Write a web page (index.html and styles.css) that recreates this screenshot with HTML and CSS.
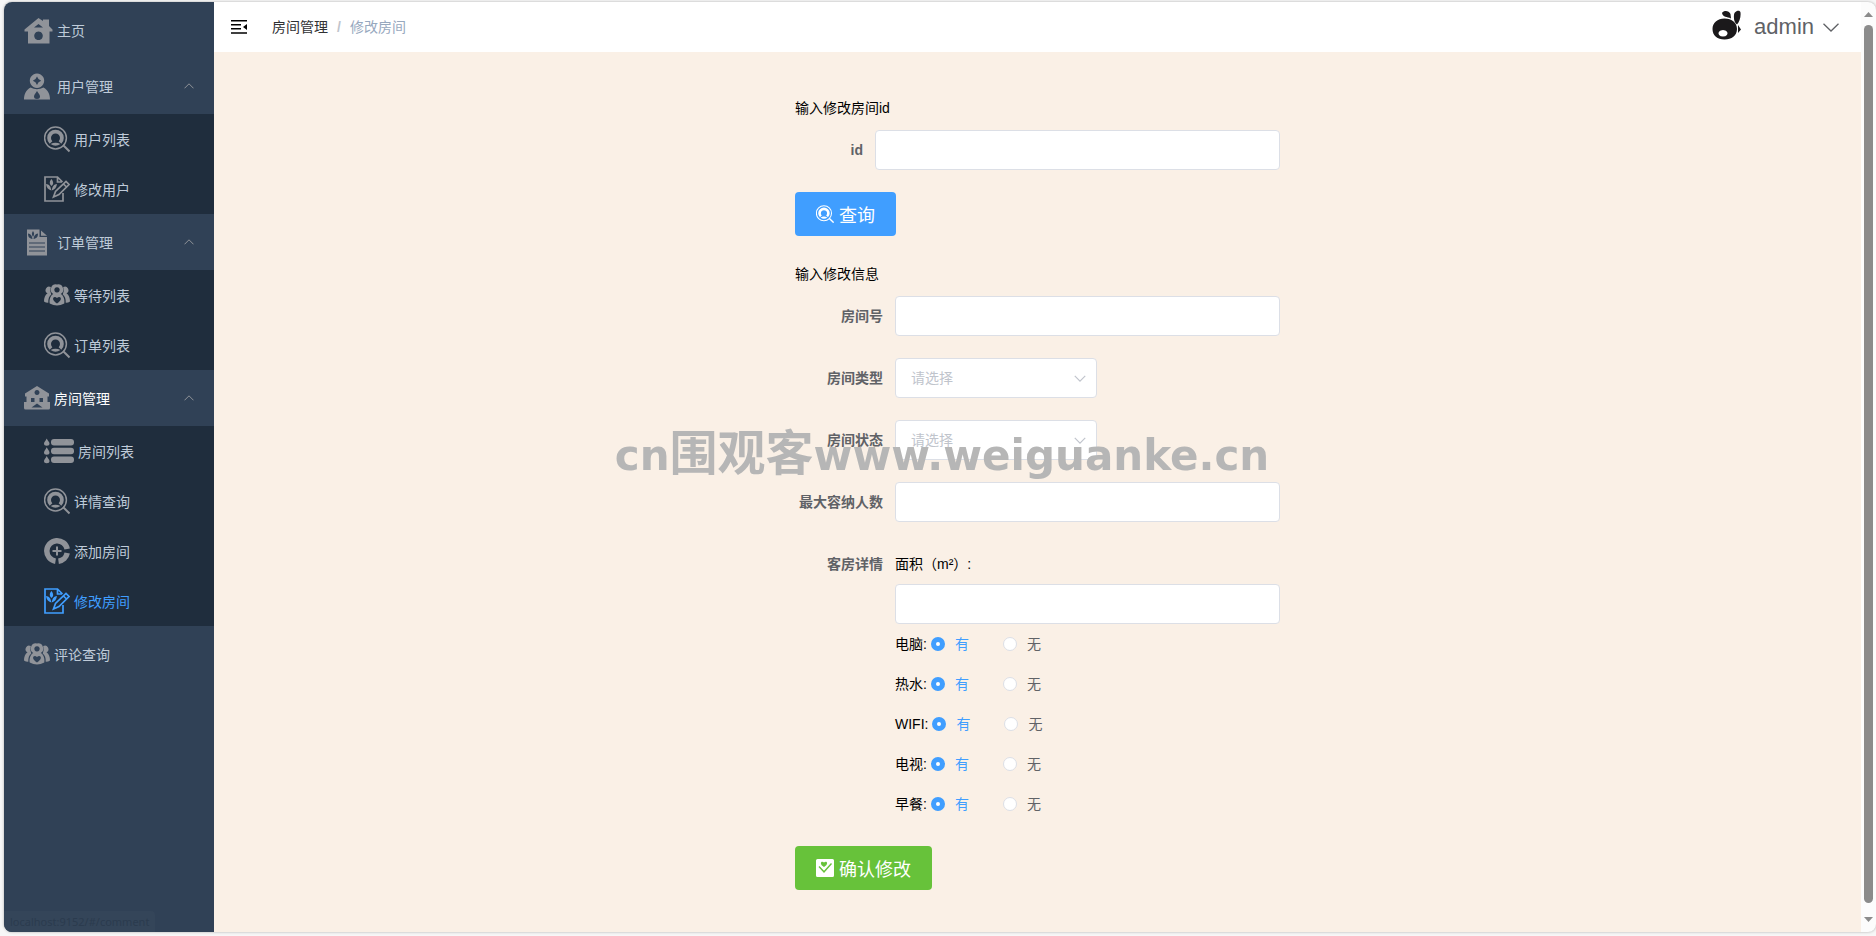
FILE: index.html
```
<!DOCTYPE html>
<html lang="zh-CN">
  <head>
    <meta charset="UTF-8" />
    <meta name="viewport" content="width=device-width, initial-scale=1.0" />
    <title>修改房间</title>
    <link rel="stylesheet" href="styles.css">
  </head>
  <body>
    <!-- 图标 -->
    <svg class="sprite" aria-hidden="true">
      <symbol id="home" viewBox="0 0 28 28">
        <path fill-rule="evenodd" d="M14 2 L18.500 5 V3.500 H24.500 V10 L28 13.500 V15.500 H25 V27.500 H3.500 V15.500 H0 V13.500 Z M9.500 11.500 H18.500 L14 8 Z M14 15.500 a4.300 4.300 0 1 0 0.010 0 Z" />
      </symbol>
      <symbol id="user" viewBox="0 0 26 28">
        <path fill-rule="evenodd" d="M13 1.500 a7.200 7.200 0 1 1 -0.010 0 Z M13 4.500 Q14 7.700 17.200 8.700 Q14 9.700 13 13 Q12 9.700 8.800 8.700 Q12 7.700 13 4.500 Z" />
        <path fill-rule="evenodd" d="M6.500 15.500 Q13 19 19.500 15.500 C24 18 26 22 26 27.500 H0 C0 22 2 18 6.500 15.500 Z M13 19 C11 22 10 23 10 24.500 a3 2.500 0 0 0 6 0 C16 23 15 22 13 19 Z" />
      </symbol>
      <symbol id="search" viewBox="0 0 26 26">
        <g fill="none" stroke="currentColor">
          <circle cx="11.500" cy="12" r="10.900" stroke-width="1.500" />
          <path d="M19 19 L25.500 25.500" stroke-width="2" />
          <path d="M7 16.500 A6.400 6.400 0 1 1 16 16.500" stroke-width="3.800" />
        </g>
        <path d="M6.500 18 Q11.500 15.500 16.500 18 Q11.500 21.500 6.500 18 Z" />
      </symbol>
      <symbol id="edit" viewBox="0 0 26 26">
        <g fill="none" stroke="currentColor" stroke-width="1.700">
          <path d="M19 17 V25 H1 V1 H13.500 L18.500 6 M13.500 1 V6 H18" />
          <path d="M9.500 21 L11.500 15.500 L22 5.500 L25 8.500 L15 18.500 Z M19.500 8 L22.500 11" />
        </g>
        <path d="M7.500 3 C5 6 5.500 8 7.500 10 C10 8 9.500 6 7.500 3 Z M2 8 C5 8.500 6.800 10 7.300 14.500 C4 13.500 2.500 11.500 2 8 Z M13 8 C10 8.500 8.500 10 7.700 14.500 C11 13.500 12.500 11.500 13 8 Z" />
      </symbol>
      <symbol id="order" viewBox="0 0 26 28">
        <path fill-rule="evenodd" d="M3 1.500 H15.500 V9 H23 V27.500 H3 Z M9 3 C7.500 5 7.500 6.500 9 9 C10.500 6.500 10.500 5 9 3 Z M4 5.500 C4 8.500 5 10.500 8.500 11 C8 7.500 7 6 4 5.500 Z M14 5.500 C11 6 10 7.500 9.500 11 C13 10.500 14 8.500 14 5.500 Z M5 14.500 V15.500 H21 V14.500 Z M5 18.500 V19.500 H21 V18.500 Z M5 22.500 V23.500 H21 V22.500 Z" />
        <path d="M17 2.500 L23 7.800 H17 Z" />
      </symbol>
      <symbol id="group" viewBox="0 0 26 22">
        <path d="M6.800 3 a3.500 3.500 0 0 0 -3.300 6.300 C1 11 0 14 0 17.500 Q2 19 4.300 18.800 Q4 13 7.300 10.500 Q5.500 7 6.800 3 Z M19.200 3 a3.500 3.500 0 0 1 3.300 6.300 C25 11 26 14 26 17.500 Q24 19 21.700 18.800 Q22 13 18.700 10.500 Q20.500 7 19.200 3 Z" />
        <path fill-rule="evenodd" d="M13 0.500 a5.200 5.200 0 0 1 3.800 9.500 C20 12 20.800 16 20.300 19.500 Q13 23.500 5.700 19.500 C5.200 16 6 12 9.200 10 a5.200 5.200 0 0 1 3.800 -9.500 Z M13 3.200 a2.700 2.700 0 1 0 0.010 0 Z M13 19.500 C6 15 10 11 13 14 C16 11 20 15 13 19.500 Z" />
      </symbol>
      <symbol id="house" viewBox="0 0 26 24">
        <path fill-rule="evenodd" d="M13 0 L25 7.500 V10.500 H23.500 V16 H26 V22 Q26 23.500 24.500 23.500 H1.500 Q0 23.500 0 22 V16 H2.500 V10.500 H1 V7.500 Z M13 4 a2.500 2.500 0 1 0 0.010 0 Z M7 12 V16 H10.500 V12 Z M15.500 12 V16 H19 V12 Z M13 17.500 L7.500 21.500 H18.500 Z" />
      </symbol>
      <symbol id="list" viewBox="0 0 30 26">
        <rect x="7" y="1" width="23" height="6.500" rx="3" />
        <rect x="7" y="9.800" width="23" height="6.500" rx="3" />
        <rect x="7" y="18.600" width="23" height="6.500" rx="3" />
        <path d="M2.700 0.500 C4 3 5.500 4 5.500 5.500 a2.700 2.200 0 0 1 -5.500 0 C0 4 1.500 3 2.700 0.500 Z M2.700 9.300 C4 12 5.500 13 5.500 14.500 a2.700 2.200 0 0 1 -5.500 0 C0 13 1.500 12 2.700 9.300 Z M2.700 18 C4 20.500 5.500 21.500 5.500 23 a2.700 2.200 0 0 1 -5.500 0 C0 21.500 1.500 20.500 2.700 18 Z" />
      </symbol>
      <symbol id="add" viewBox="0 0 26 26">
        <g fill="none" stroke="currentColor">
          <path d="M23.200 11 A10.300 10.300 0 1 0 11.500 23.200 M14.500 23.200 A10.300 10.300 0 0 0 23.200 15" stroke-width="5.500" />
          <path d="M13 8.500 V17.500 M8.500 13 H17.500" stroke-width="2" />
        </g>
      </symbol>
      <symbol id="check" viewBox="0 0 18 18">
        <path fill-rule="evenodd" d="M1.500 0 H16.500 Q18 0 18 1.500 V16.500 Q18 18 16.500 18 H1.500 Q0 18 0 16.500 V1.500 Q0 0 1.500 0 Z M2.500 8 L8 14 L16 5 L15 4 L8 11.800 L3.500 7 Z M8 8 C2.500 4.500 5.500 1 8 3.500 C10.500 1 13.500 4.500 8 8 Z" />
      </symbol>
      <symbol id="up" viewBox="0 0 10 6">
        <path fill="none" stroke="currentColor" d="M0.500 5.300 L5 0.800 L9.500 5.300" />
      </symbol>
      <symbol id="down" viewBox="0 0 16 9">
        <path fill="none" stroke="currentColor" stroke-width="1.300" d="M0.500 0.800 L8 8 L15.500 0.800" />
      </symbol>
    </svg>

    <div class="app">
      <nav class="sidebar">
        <ul class="menu">
          <li><a class="item" href="#/home"><svg class="icon-home"><use href="#home" /></svg>主页</a></li>
          <li>
            <button class="item wide" type="button"><svg class="icon"><use href="#user" /></svg>用户管理<svg class="arrow"><use href="#up" /></svg></button>
            <ul class="submenu">
              <li><a class="item" href="#/userList"><svg class="icon"><use href="#search" /></svg>用户列表</a></li>
              <li><a class="item" href="#/userEdit"><svg class="icon"><use href="#edit" /></svg>修改用户</a></li>
            </ul>
          </li>
          <li>
            <button class="item wide" type="button"><svg class="icon"><use href="#order" /></svg>订单管理<svg class="arrow"><use href="#up" /></svg></button>
            <ul class="submenu">
              <li><a class="item" href="#/waitList"><svg class="icon"><use href="#group" /></svg>等待列表</a></li>
              <li><a class="item" href="#/orderList"><svg class="icon"><use href="#search" /></svg>订单列表</a></li>
            </ul>
          </li>
          <li>
            <button class="item open" type="button"><svg class="icon"><use href="#house" /></svg>房间管理<svg class="arrow"><use href="#up" /></svg></button>
            <ul class="submenu">
              <li><a class="item" href="#/roomList"><svg class="icon-list"><use href="#list" /></svg>房间列表</a></li>
              <li><a class="item" href="#/roomQuery"><svg class="icon"><use href="#search" /></svg>详情查询</a></li>
              <li><a class="item" href="#/roomAdd"><svg class="icon"><use href="#add" /></svg>添加房间</a></li>
              <li><a class="item active" href="#/roomEdit"><svg class="icon"><use href="#edit" /></svg>修改房间</a></li>
            </ul>
          </li>
          <li><a class="item" href="#/comment"><svg class="icon"><use href="#group" /></svg>评论查询</a></li>
        </ul>
        <p class="status">localhost:9152/#/comment</p>
      </nav>

      <div class="main">
        <header class="navbar">
          <button class="fold" type="button" aria-label="收起菜单">
            <svg viewBox="0 0 16 14"><path d="M0 0 H16 V1.500 H0 Z M0 4 H10 V5.500 H0 Z M0 8 H10 V9.500 H0 Z M0 12.300 H16 V13.800 H0 Z M16 4 V10 L12 7 Z" /></svg>
          </button>
          <div class="breadcrumb">
            <a href="#/room">房间管理</a><span class="slash">/</span><span class="current">修改房间</span>
          </div>
          <button class="account" type="button">
            <svg class="avatar" viewBox="0 0 30 30">
              <path fill-rule="evenodd" d="M12.500 8.500 C20 8.500 25 13 25 19 C25 25.500 19.500 29.500 12.500 29.500 C5.500 29.500 0.500 25.500 0.500 19 C0.500 13 5.500 8.500 12.500 8.500 Z M11 20 a4.500 3.300 0 1 0 0.010 0 Z" />
              <path d="M10 3 C12 0 17 0.500 18.500 4 L19 8.500 C15 6.500 11 7.500 10 3 Z M22 5 C22 1 28 -1 28.500 2.500 C29 7 27.500 12 25 14.500 C22.500 13 21.500 9 22 5 Z M26 15 L29 19.500 L26 23 Z" />
            </svg>
            admin
            <svg class="down"><use href="#down" /></svg>
          </button>
        </header>

        <main class="content">
          <div class="panel">
            <form class="query">
              <h3>输入修改房间id</h3>
              <div class="row">
                <label class="name" for="id">id</label>
                <input class="text" type="text" id="id" />
              </div>
              <button class="btn primary" type="button"><svg><use href="#search" /></svg>查询</button>
            </form>

            <form class="edit">
              <h3>输入修改信息</h3>
              <div class="row">
                <label class="name" for="num">房间号</label>
                <input class="text" type="text" id="num" />
              </div>
              <div class="row">
                <label class="name" for="type">房间类型</label>
                <div class="select">
                  <select id="type"><option>请选择</option></select>
                  <svg><use href="#up" /></svg>
                </div>
              </div>
              <div class="row">
                <label class="name" for="state">房间状态</label>
                <div class="select">
                  <select id="state"><option>请选择</option></select>
                  <svg><use href="#up" /></svg>
                </div>
              </div>
              <div class="row">
                <label class="name" for="max">最大容纳人数</label>
                <input class="text" type="text" id="max" />
              </div>
              <div class="row">
                <span class="name">客房详情</span>
                <div class="detail">
                  <label class="area" for="area">面积（m²）:</label>
                  <input class="text" type="text" id="area" />
                  <div class="radios" role="radiogroup" aria-label="电脑">
                    <span>电脑:</span>
                    <label><input type="radio" name="pc" checked /><span>有</span></label>
                    <label><input type="radio" name="pc" /><span>无</span></label>
                  </div>
                  <div class="radios" role="radiogroup" aria-label="热水">
                    <span>热水:</span>
                    <label><input type="radio" name="water" checked /><span>有</span></label>
                    <label><input type="radio" name="water" /><span>无</span></label>
                  </div>
                  <div class="radios" role="radiogroup" aria-label="WIFI">
                    <span>WIFI:</span>
                    <label><input type="radio" name="wifi" checked /><span>有</span></label>
                    <label><input type="radio" name="wifi" /><span>无</span></label>
                  </div>
                  <div class="radios" role="radiogroup" aria-label="电视">
                    <span>电视:</span>
                    <label><input type="radio" name="tv" checked /><span>有</span></label>
                    <label><input type="radio" name="tv" /><span>无</span></label>
                  </div>
                  <div class="radios" role="radiogroup" aria-label="早餐">
                    <span>早餐:</span>
                    <label><input type="radio" name="food" checked /><span>有</span></label>
                    <label><input type="radio" name="food" /><span>无</span></label>
                  </div>
                </div>
              </div>
              <button class="btn success" type="button"><svg><use href="#check" /></svg>确认修改</button>
            </form>
          </div>
        </main>
      </div>

      <div class="scrollbar">
        <svg viewBox="0 0 9 5"><path d="M0 5 L4.500 0 L9 5 Z" /></svg>
        <div class="thumb"></div>
        <svg viewBox="0 0 9 5"><path d="M0 0 L4.500 5 L9 0 Z" /></svg>
      </div>
    </div>

    <div class="watermark">cn<span>围观客</span>www.weiguanke.cn</div>
  </body>
</html>
```

FILE: styles.css
```
* {
  margin: 0;
  padding: 0;
  box-sizing: border-box;
}
body {
  background-color: #f7f7f7;
  font-family: "Liberation Sans", "Noto Sans CJK SC", sans-serif;
  font-size: 14px;
  color: #000;
}
ul {
  list-style: none;
}
a {
  text-decoration: none;
  color: inherit;
}
button,
input,
select {
  font: inherit;
}
button {
  border: none;
  background: none;
  cursor: pointer;
}
svg {
  fill: currentColor;
  flex-shrink: 0;
}
.sprite {
  display: none;
}
.app {
  display: flex;
  min-height: calc(100vh - 6px);
  margin: 2px 0 4px 4px;
  border-radius: 8px;
  overflow: hidden;
  background-color: #fcfcfc;
  box-shadow: 0 0 3px rgba(0, 0, 0, 0.3);
}

/* 左侧菜单 */
.sidebar {
  flex: 0 0 210px;
  display: flex;
  flex-direction: column;
  background-color: #304156;
  color: #bfcbd9;
}
.item {
  display: flex;
  align-items: center;
  gap: 4px;
  width: 100%;
  height: 56px;
  padding: 0 20px;
  color: inherit;
}
.wide {
  gap: 7px;
}
.open {
  color: #fff;
}
.submenu {
  background-color: #1f2d3d;
}
.submenu .item {
  height: 50px;
  padding-left: 40px;
}
.item svg {
  color: #909399;
}
.icon {
  width: 26px;
  height: 28px;
}
.icon-home {
  width: 29px;
  height: 28px;
}
.icon-list {
  width: 30px;
  height: 26px;
}
.arrow {
  width: 10px;
  height: 6px;
  margin-left: auto;
}
.submenu .active,
.submenu .active svg {
  color: #409eff;
}
.status {
  align-self: flex-start;
  margin-top: auto;
  padding: 0 6px;
  border-top-right-radius: 4px;
  background-color: #344559;
  color: #2b3b4e;
  font-family: "Noto Sans", sans-serif;
  font-size: 11px;
  line-height: 21px;
}

/* 顶部导航 */
.main {
  flex: 1;
  display: flex;
  flex-direction: column;
}
.navbar {
  display: flex;
  align-items: center;
  height: 50px;
  padding: 0 22px 0 17px;
  background-color: #fff;
}
.fold svg {
  display: block;
  width: 16px;
  height: 14px;
}
.breadcrumb {
  display: flex;
  align-items: center;
  margin-left: 25px;
  line-height: 20px;
  color: #303133;
}
.slash {
  margin: 0 9px;
  font-weight: bold;
  color: #c0c4cc;
}
.current {
  color: #97a8be;
}
.account {
  display: flex;
  align-items: center;
  gap: 9px;
  margin-left: auto;
  font-size: 22px;
  color: #606266;
}
.avatar {
  width: 30px;
  height: 30px;
  margin-right: 3px;
  margin-bottom: 5px;
  color: #1b191b;
}
.down {
  width: 16px;
  height: 9px;
}

/* 表单 */
.content {
  flex: 1;
  padding: 34px 20px 22px;
  background-color: #faf0e6;
}
.panel {
  max-width: 485px;
  margin: 0 auto;
}
h3 {
  font-size: 14px;
  font-weight: normal;
  line-height: 44px;
}
.row {
  display: flex;
  margin-bottom: 22px;
}
.name {
  flex: 0 0 100px;
  padding-right: 12px;
  text-align: right;
  line-height: 40px;
  font-weight: bold;
  color: #606266;
}
.query .name {
  flex-basis: 80px;
}
.text,
select {
  width: 100%;
  height: 40px;
  padding: 0 15px;
  border: 1px solid #dcdfe6;
  border-radius: 4px;
  background-color: #fff;
  color: #606266;
}
.text {
  display: block;
}
.select {
  display: grid;
  align-items: center;
  width: 202px;
}
.select select,
.select svg {
  grid-area: 1 / 1;
}
select {
  appearance: none;
  color: #c0c4cc;
}
.select svg {
  justify-self: end;
  width: 12px;
  height: 7px;
  margin-right: 11px;
  transform: rotate(180deg);
  color: #c0c4cc;
  pointer-events: none;
}
.detail {
  flex: 1;
}
.area {
  display: block;
  line-height: 40px;
}
.radios {
  display: flex;
  align-items: center;
  gap: 4px;
  height: 40px;
  line-height: 20px;
}
.radios label {
  display: flex;
  align-items: center;
  gap: 10px;
  margin-right: 30px;
  color: #606266;
}
.radios input {
  appearance: none;
  width: 14px;
  height: 14px;
  border: 1px solid #dcdfe6;
  border-radius: 50%;
  background-color: #fff;
}
.radios input:checked {
  border: 5px solid #409eff;
}
.radios input:checked + span {
  color: #409eff;
}
.btn {
  display: flex;
  align-items: center;
  gap: 5px;
  height: 44px;
  padding: 0 21px;
  border-radius: 4px;
  font-size: 18px;
  color: #fff;
}
.btn svg {
  width: 18px;
  height: 18px;
}
.primary {
  margin-bottom: 16px;
  background-color: #409eff;
}
.success {
  background-color: #67c23a;
}

/* 滚动条 */
.scrollbar {
  flex: 0 0 15px;
  display: flex;
  flex-direction: column;
  align-items: center;
  gap: 8px;
  padding: 10px 0;
  color: #8b8b8b;
}
.scrollbar svg {
  width: 9px;
  height: 5px;
}
.thumb {
  flex: 1;
  width: 9px;
  margin-bottom: 6px;
  border-radius: 5px;
  background-color: #8b8b8b;
}

/* 水印盖在页面上面 */
.watermark {
  position: fixed;
  top: 0;
  right: 0;
  bottom: 32px;
  left: 8px;
  display: flex;
  justify-content: center;
  align-items: baseline;
  align-content: center;
  flex-wrap: wrap;
  white-space: nowrap;
  font-family: "DejaVu Sans", "Noto Sans CJK SC", sans-serif;
  font-size: 42px;
  font-weight: bold;
  line-height: 48px;
  color: #b6b6b6;
  mix-blend-mode: darken;
  pointer-events: none;
}
.watermark span {
  font-family: "Noto Sans CJK SC", sans-serif;
  font-size: 48px;
}
```
